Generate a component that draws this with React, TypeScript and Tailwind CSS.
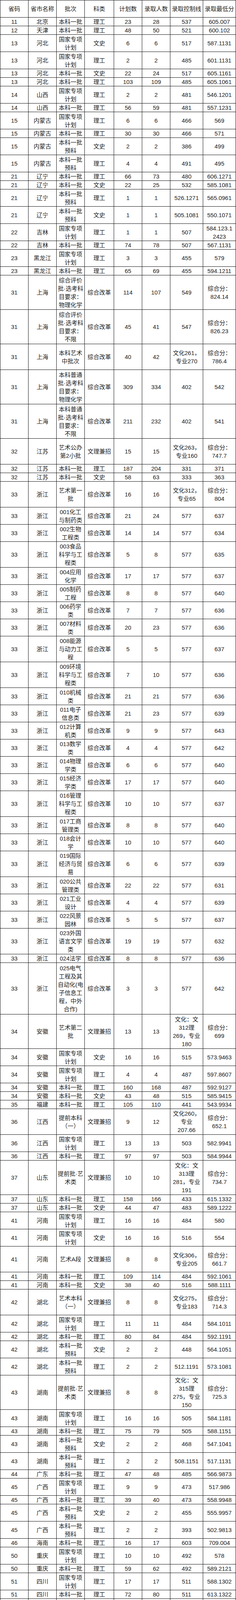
import React from 'react';

// code, province, batch, type, plan, admitted, control line, lowest score, line count
// "|" splits a cell into lines; a leading "#" marks the spaced three-part cells
type Row = [string, string, string, string, string, string, string, string, number];

const header = ['省码', '省市名称', '批次', '科类', '计划数', '录取人数', '录取控制线', '录取最低分'];

const rows: Row[] = [
  ['11', '北京', '本科一批', '理工', '23', '28', '537', '605.007', 1],
  ['12', '天津', '本科一批', '理工', '48', '50', '521', '600.102', 1],
  ['13', '河北', '国家专项|计划', '文史', '6', '6', '517', '587.1131', 2],
  ['13', '河北', '国家专项|计划', '理工', '2', '2', '485', '601.1131', 2],
  ['13', '河北', '本科一批', '文史', '22', '24', '517', '605.1161', 1],
  ['13', '河北', '本科一批', '理工', '103', '109', '485', '605.1061', 1],
  ['14', '山西', '国家专项|计划', '理工', '2', '2', '481', '546.1201', 2],
  ['14', '山西', '本科一批', '理工', '56', '59', '481', '557.1231', 1],
  ['15', '内蒙古', '国家专项|计划', '理工', '6', '6', '466', '569', 2],
  ['15', '内蒙古', '本科一批', '理工', '30', '30', '466', '571', 1],
  ['15', '内蒙古', '本科一批|预科', '文史', '2', '2', '386', '499', 2],
  ['15', '内蒙古', '本科一批|预科', '理工', '4', '4', '491', '495', 2],
  ['21', '辽宁', '本科一批', '理工', '66', '73', '480', '606.1271', 1],
  ['21', '辽宁', '本科一批', '文史', '22', '25', '532', '585.1081', 1],
  ['21', '辽宁', '本科一批|预科', '理工', '1', '1', '526.1271', '565.0961', 2],
  ['21', '辽宁', '本科一批|预科', '文史', '1', '1', '505.1081', '550.1071', 2],
  ['22', '吉林', '国家专项|计划', '理工', '1', '1', '507', '584.123.1|2423', 2],
  ['22', '吉林', '本科一批', '理工', '74', '78', '507', '567.1131', 1],
  ['23', '黑龙江', '国家专项|计划', '理工', '3', '3', '455', '579', 2],
  ['23', '黑龙江', '本科一批', '理工', '65', '69', '455', '594.1211', 1],
  ['31', '上海', '综合评价|批·选考科|目要求：|物理化学', '综合改革', '114', '107', '549', '综合分：|824.14', 4],
  ['31', '上海', '综合评价|批·选考科|目要求：|不限', '综合改革', '45', '41', '547', '综合分：|826.23', 4],
  ['31', '上海', '本科艺术|中批次', '综合改革', '40', '42', '文化261，|专业270', '综合分：|786.4', 3],
  ['31', '上海', '本科普通|批·选考科|目要求：|物理化学', '综合改革', '309', '334', '402', '542', 4],
  ['31', '上海', '本科普通|批·选考科|目要求：|不限', '综合改革', '211', '232', '402', '541', 4],
  ['32', '江苏', '艺术公办|第2小批', '文理兼招', '15', '15', '文化263，|专业160', '综合分：|747.7', 3],
  ['32', '江苏', '本科一批', '理工', '187', '204', '331', '371', 1],
  ['32', '江苏', '本科一批', '文史', '58', '63', '333', '363', 1],
  ['33', '浙江', '艺术第一|批', '综合改革', '16', '16', '文化312，|专业65', '综合分：|804', 3],
  ['33', '浙江', '001化工|与制药类', '综合改革', '21', '24', '577', '637', 2],
  ['33', '浙江', '002生物|工程类', '综合改革', '14', '14', '577', '634', 2],
  ['33', '浙江', '003食品|科学与工|程类', '综合改革', '5', '8', '577', '635', 3],
  ['33', '浙江', '004应用|化学', '综合改革', '17', '17', '577', '637', 2],
  ['33', '浙江', '005制药|工程', '综合改革', '8', '8', '577', '640', 2],
  ['33', '浙江', '006药学|类', '综合改革', '7', '7', '577', '636', 2],
  ['33', '浙江', '007材料|类', '综合改革', '20', '23', '577', '636', 2],
  ['33', '浙江', '008能源|与动力工|程', '综合改革', '5', '5', '577', '637', 3],
  ['33', '浙江', '009环境|科学与工|程类', '综合改革', '7', '10', '577', '636', 3],
  ['33', '浙江', '010机械|类', '综合改革', '21', '21', '577', '636', 2],
  ['33', '浙江', '011电子|信息类', '综合改革', '21', '23', '577', '639', 2],
  ['33', '浙江', '012计算|机类', '综合改革', '9', '9', '577', '643', 2],
  ['33', '浙江', '013数学|类', '综合改革', '4', '4', '577', '642', 2],
  ['33', '浙江', '014物理|学类', '综合改革', '6', '6', '577', '640', 2],
  ['33', '浙江', '015经济|学类', '综合改革', '17', '17', '577', '640', 2],
  ['33', '浙江', '016管理|科学与工|程类', '综合改革', '10', '10', '577', '637', 3],
  ['33', '浙江', '017工商|管理类', '综合改革', '8', '8', '577', '640', 2],
  ['33', '浙江', '018会计|学', '综合改革', '10', '10', '577', '640', 2],
  ['33', '浙江', '019国际|经济与贸|易', '综合改革', '6', '6', '577', '639', 3],
  ['33', '浙江', '020公共|管理类', '综合改革', '22', '22', '577', '631', 2],
  ['33', '浙江', '021工业|设计', '综合改革', '4', '4', '577', '639', 2],
  ['33', '浙江', '022风景|园林', '综合改革', '5', '5', '577', '637', 2],
  ['33', '浙江', '023外国|语言文学|类', '综合改革', '19', '19', '577', '632', 3],
  ['33', '浙江', '024法学', '综合改革', '8', '8', '577', '636', 1],
  ['33', '浙江', '025电气|工程及其|自动化(电|子信息工|程，中外|合作)', '综合改革', '3', '3', '577', '642', 6],
  ['34', '安徽', '艺术第二|批', '文理兼招', '13', '13', '文化：文|312理|269，专业|180', '综合分：|699', 4],
  ['34', '安徽', '国家专项|计划', '文史', '16', '16', '515', '573.9463', 2],
  ['34', '安徽', '国家专项|计划', '理工', '4', '4', '487', '597.8607', 2],
  ['34', '安徽', '本科一批', '理工', '160', '168', '487', '592.9127', 1],
  ['34', '安徽', '本科一批', '文史', '43', '48', '515', '585.9415', 1],
  ['35', '福建', '本科一批', '理工', '105', '110', '441', '543.9934', 1],
  ['36', '江西', '提前本科|（一）', '文理兼招', '9', '12', '文化260，|专业|207.66', '综合分：|652.1', 3],
  ['36', '江西', '国家专项|计划', '理工', '13', '13', '503', '582.9941', 2],
  ['36', '江西', '本科一批', '理工', '97', '97', '503', '584.9944', 1],
  ['37', '山东', '提前批·艺|术类', '文理兼招', '10', '10', '文化：文|313理|281，专业|191', '综合分：|734.7', 4],
  ['37', '山东', '本科一批', '理工', '158', '166', '433', '615.1332', 1],
  ['37', '山东', '本科一批', '文史', '44', '47', '483', '589.1222', 1],
  ['41', '河南', '国家专项|计划', '理工', '16', '16', '484', '580', 2],
  ['41', '河南', '国家专项|计划', '文史', '16', '16', '516', '554', 2],
  ['41', '河南', '艺术A段', '文理兼招', '8', '8', '文化306，|专业205', '综合分：|661.7', 3],
  ['41', '河南', '本科一批', '理工', '109', '114', '484', '592.1061', 1],
  ['41', '河南', '本科一批', '文史', '38', '40', '516', '588.1111', 1],
  ['42', '湖北', '艺术本科|（一）', '文理兼招', '8', '8', '文化275，|专业183', '综合分：|714.3', 3],
  ['42', '湖北', '国家专项|计划', '理工', '11', '11', '484', '584.1011', 2],
  ['42', '湖北', '本科一批', '理工', '80', '84', '484', '592.1191', 1],
  ['42', '湖北', '本科一批|预科', '文史', '2', '2', '448', '564.1051', 2],
  ['42', '湖北', '本科一批|预科', '理工', '2', '2', '512.1191', '573.1081', 2],
  ['43', '湖南', '提前批·艺|术类', '文理兼招', '8', '8', '文化：文|315理|275，专业|150', '综合分：|725.3', 4],
  ['43', '湖南', '国家专项|计划', '理工', '16', '16', '505', '584.1181', 2],
  ['43', '湖南', '本科一批', '理工', '75', '79', '505', '588.1151', 1],
  ['43', '湖南', '本科一批|预科', '文史', '2', '2', '468', '547.1041', 2],
  ['43', '湖南', '本科一批|预科', '理工', '2', '2', '508.1151', '517.1131', 2],
  ['44', '广东', '本科一批', '理工', '47', '48', '485', '566.9873', 1],
  ['45', '广西', '国家专项|计划', '理工', '9', '9', '473', '517.986', 2],
  ['45', '广西', '本科一批', '理工', '39', '40', '473', '558.9948', 1],
  ['45', '广西', '本科一批|预科', '文史', '2', '2', '455', '555.9957', 2],
  ['45', '广西', '本科一批|预科', '理工', '2', '2', '393', '502.9813', 2],
  ['46', '海南', '本科一批', '理工', '16', '17', '603', '709.004', 1],
  ['50', '重庆', '国家专项|计划', '理工', '10', '10', '492', '578', 2],
  ['50', '重庆', '本科一批', '理工', '59', '62', '492', '589.2121', 1],
  ['51', '四川', '国家专项|计划', '理工', '17', '17', '511', '588.1302', 2],
  ['51', '四川', '本科一批', '理工', '72', '80', '511', '613.1322', 1],
  ['52', '贵州', '国家专项|计划', '理工', '26', '27', '456', '558.0995', 2],
  ['52', '贵州', '本科一批', '理工', '41', '44', '456', '564.0996', 1],
  ['53', '云南', '国家专项|计划', '理工', '19', '19', '500', '562.9631', 2],
  ['54', '西藏', '国家专项|计划', '理工', '2', '2', '', '533|（汉），|373（少）', 4],
  ['61', '陕西', '艺术提前|批', '艺术文', '4', '4', '文化297，|专业195', '587.7', 3],
  ['61', '陕西', '艺术提前|批', '艺术理', '4', '4', '文化258，|专业195', '610.7', 3],
  ['61', '陕西', '国家专项|计划', '理工', '17', '17', '449', '576.3081', 2],
  ['61', '陕西', '本科一批', '理工', '72', '76', '449', '578.3091', 1],
  ['62', '甘肃', '国家专项|计划', '理工', '26', '26', '460', '552.1072', 2],
  ['62', '甘肃', '本科一批', '理工', '87', '95', '460', '555.1142', 1],
  ['63', '青海', '国家专项|计划', '理工', '3', '3', '391', '490', 2],
  ['63', '青海', '本科一批', '理工', '15', '16', '391', '492', 1],
  ['63', '青海', '本科一批|预科', '文史', '2', '2', '453', '479', 2],
  ['63', '青海', '本科一批|预科', '理工', '2', '2', '381', '389', 2],
  ['64', '宁夏', '国家专项|计划', '理工', '3', '3', '439', '520.2091', 2],
  ['64', '宁夏', '本科一批', '理工', '22', '23', '439', '541.2051', 1],
  ['65', '新疆', '国家专项|计划', '理工', '6', '6', '437', '523', 2],
  ['65', '新疆', '南疆单列|计划', '理工', '3', '3', '437', '525', 2],
  ['65', '新疆', '本科一批', '理工', '71', '74', '437', '557.1172', 1],
  ['65', '新疆', '本科一批·|民考汉', '理工', '19', '19', '383', '468.0592', 2],
  ['65', '新疆', '本科一批·|民考汉', '文史', '3', '3', '411', '519.1002', 2],
  ['', '西藏内地|班', '本科一批', '理工', '9', '8', '少数民族|285|进藏干部子|女415', '294', 4],
  ['', '西藏内地|班', '本科一批', '文史', '14', '14', '少数民族|356|进藏干部子|女420', '365', 4],
  ['', '新疆内地|班', '本科一批', '理工', '16', '16', '#民考汉(四|年)362|民考汉391|汉语言481', '#民考汉(四|年)470|民考汉484|汉语言523', 6],
  ['', '新疆内地|班', '本科一批', '文史', '13', '13', '#民考汉(四|年)389|民考汉412|汉语言476', '#民考汉(四|年)425|民考汉491|汉语言516', 6],
  ['', '港澳台联|招', '本科一批', '文史', '——', '9', '400', '464', 2],
  ['', '港澳台联|招', '本科一批', '理工', '——', '18', '400', '433', 2],
];

const heights: Record<number, string> = {
  1: 'h-[22px]',
  2: 'h-[44px]',
  3: 'h-[66px]',
  4: 'h-[88px]',
  6: 'h-[132px]',
};

const Cell = ({ text }: { text: string }) => {
  if (text.startsWith('#')) {
    const [a, b, c, d] = text.slice(1).split('|');
    return (
      <div className="flex flex-col items-center overflow-hidden border-r border-[#111]">
        <span className="block h-[21px] mt-[0.5px] leading-[21px] whitespace-nowrap">{a}</span>
        <span className="block h-[21px] mt-[1px] leading-[21px] whitespace-nowrap">{b}</span>
        <span className="mt-[12px] block h-[21px] leading-[21px] whitespace-nowrap">{c}</span>
        <span className="mt-[23px] block h-[21px] leading-[21px] whitespace-nowrap">{d}</span>
      </div>
    );
  }
  return (
    <div className="flex flex-col items-center justify-center overflow-hidden border-r border-[#111] text-center">
      {text.split('|').map((line, i) => (
        <span key={i} className="block leading-[21px] whitespace-nowrap">
          {line}
        </span>
      ))}
    </div>
  );
};

export default function App() {
  return (
    <div className="w-[604px] bg-white text-[15px] text-[#1c1c1c] font-['Liberation_Sans','Noto_Sans_CJK_SC',sans-serif]">
      <div className="border-t border-l border-[#111]">
        <div className="grid h-[44px] grid-cols-[72px_72px_72px_75px_72px_72px_84px_84px] border-b border-[#111]">
          {header.map((h) => (
            <Cell key={h} text={h} />
          ))}
        </div>
        {rows.map((row, i) => (
          <div
            key={i}
            className={`grid grid-cols-[72px_72px_72px_75px_72px_72px_84px_84px] border-b border-[#111] ${heights[row[8]]}`}
          >
            {row.slice(0, 8).map((c, j) => (
              <Cell key={j} text={c as string} />
            ))}
          </div>
        ))}
      </div>
    </div>
  );
}
